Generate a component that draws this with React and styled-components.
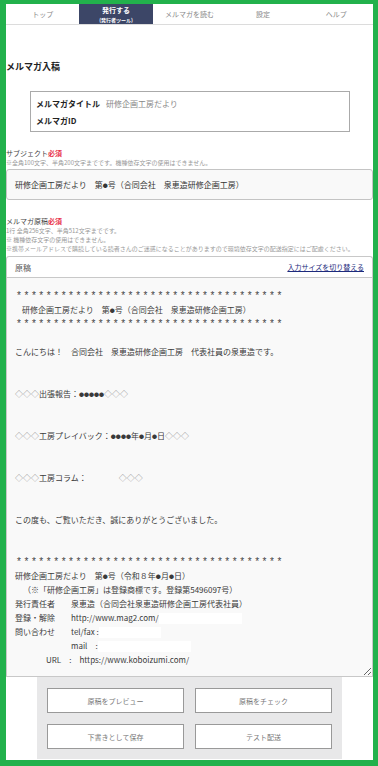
import React from 'react';
import styled, { createGlobalStyle } from 'styled-components';

const GlobalStyle = createGlobalStyle`
  html, body {
    margin: 0;
    padding: 0;
    background: #ffffff;
  }
  body {
    font-family: "Noto Sans CJK JP", "Noto Sans", sans-serif;
    color: #333;
  }
`;

const Frame = styled.div`
  box-sizing: border-box;
  width: 378px;
  height: 766px;
  border-style: solid;
  border-color: #22b14c;
  border-width: 4px 5px 6px 6px;
  background: #fff;
  overflow: hidden;
  display: flex;
  flex-direction: column;
`;

const Nav = styled.nav`
  display: grid;
  grid-template-columns: repeat(5, 1fr);
  height: 20px;
  border-bottom: 1px solid #dcdcdc;
`;

const NavItem = styled.div`
  display: flex;
  flex-direction: column;
  align-items: center;
  justify-content: center;
  gap: 1px;
  font-size: 7px;
  line-height: 9px;
  color: ${(p) => (p.active ? '#fff' : '#888')};
  background: ${(p) => (p.active ? '#3c4667' : 'transparent')};
  font-weight: ${(p) => (p.active ? 700 : 400)};
`;

const NavSub = styled.span`
  font-size: 5px;
  line-height: 7px;
`;

const Title = styled.h1`
  margin: 37px 0 0 0;
  font-size: 9px;
  font-weight: 700;
  color: #222;
  line-height: 10px;
`;

const InfoBox = styled.div`
  margin: 19px 23px 0 24px;
  border: 1px solid #aaa;
  padding: 5px 5px 4px;
  display: flex;
  flex-direction: column;
  gap: 4px;
`;

const InfoRow = styled.div`
  display: flex;
  align-items: center;
  font-size: 8px;
  line-height: 13px;
`;

const InfoLabel = styled.span`
  font-weight: 700;
  color: #222;
  width: 70px;
`;

const InfoValue = styled.span`
  color: #888;
`;

const FieldLabel = styled.div`
  margin-top: ${(p) => p.top}px;
  font-size: 7px;
  line-height: 10px;
  color: #444;
`;

const Required = styled.span`
  color: #e8324a;
  font-weight: 700;
`;

const Note = styled.div`
  font-size: 6px;
  line-height: 9px;
  color: #999;
`;

const SubjectInput = styled.div`
  box-sizing: border-box;
  margin-top: 2px;
  height: 31px;
  border: 1px solid #c4c4c4;
  border-radius: 3px;
  background: #f9f9f9;
  display: flex;
  align-items: center;
  padding-left: 8px;
  font-size: 8px;
  color: #333;
`;

const Draft = styled.div`
  margin-top: 3px;
  border: 1px solid #c8c8c8;
  border-bottom: none;
  border-radius: 3px 3px 0 0;
`;

const DraftHead = styled.div`
  display: flex;
  justify-content: space-between;
  align-items: center;
  height: 20px;
  padding: 0 8px 0 8px;
  border-bottom: 1px solid #c8c8c8;
`;

const DraftTitle = styled.span`
  font-size: 8px;
  color: #555;
`;

const SwitchLink = styled.a`
  font-size: 7px;
  color: #1d2a7c;
  text-decoration: underline;
`;

const Body = styled.div`
  box-sizing: border-box;
  height: 399px;
  background: #f9f9f9;
  border-bottom: 1px solid #c8c8c8;
  padding: 11px 8px 0 8px;
  font-size: 8px;
  line-height: 14px;
  color: #3a3a3a;
  resize: both;
  overflow: hidden;
  white-space: pre;
`;

const Line = styled.div`
  height: 14px;
  padding-left: ${(p) => p.indent || 0}px;
`;

const Stars = styled.div`
  height: 14px;
  padding-left: 2px;
  font-family: "Liberation Sans", Arial, sans-serif;
  font-size: 10px;
  letter-spacing: 3.55px;
  color: #444;
`;

const Diamond = styled.span`
  color: #888;
`;

const Dot = styled.span`
  font-size: 5px;
  vertical-align: 1px;
`;

const Col = styled.span`
  display: inline-block;
  width: ${(p) => p.w}px;
`;

const Redact = styled.span`
  display: inline-block;
  vertical-align: middle;
  width: ${(p) => p.w}px;
  height: 11px;
  background: #fff;
`;

const ButtonPanel = styled.div`
  margin: 0 31px 0 31px;
  background: #e8e8e9;
  padding: 11px 10px 10px;
  display: grid;
  grid-template-columns: 1fr 1fr;
  column-gap: 11px;
  row-gap: 11px;
`;

const Button = styled.button`
  box-sizing: border-box;
  height: 25px;
  background: #fff;
  border: 1px solid #999;
  font-family: "Noto Sans CJK JP", sans-serif;
  font-size: 7px;
  color: #777;
  cursor: pointer;
`;

const Content = styled.div`
  display: flex;
  flex-direction: column;
`;

const stars = '*'.repeat(36);

const dots = (n) => Array.from({ length: n }, (_, i) => <Dot key={i}>●</Dot>);

export default function App() {
  const navItems = ['トップ', null, 'メルマガを読む', '設定', 'ヘルプ'];
  return (
    <>
      <GlobalStyle />
      <Frame>
        <Nav>
          {navItems.map((label, i) =>
            label ? (
              <NavItem key={i}>{label}</NavItem>
            ) : (
              <NavItem key={i} active>
                <span>発行する</span>
                <NavSub>(発行者ツール)</NavSub>
              </NavItem>
            )
          )}
        </Nav>
        <Content>
          <Title>メルマガ入稿</Title>
          <InfoBox>
            <InfoRow>
              <InfoLabel>メルマガタイトル</InfoLabel>
              <InfoValue>研修企画工房だより</InfoValue>
            </InfoRow>
            <InfoRow>
              <InfoLabel>メルマガID</InfoLabel>
            </InfoRow>
          </InfoBox>

          <FieldLabel top={16}>
            サブジェクト<Required>必須</Required>
          </FieldLabel>
          <Note>※全角100文字、半角200文字までです。機種依存文字の使用はできません。</Note>
          <SubjectInput>研修企画工房だより　第{dots(1)}号（合同会社　泉恵造研修企画工房）</SubjectInput>

          <FieldLabel top={16}>
            メルマガ原稿<Required>必須</Required>
          </FieldLabel>
          <Note>1行 全角256文字、半角512文字までです。</Note>
          <Note>※ 機種依存文字の使用はできません。</Note>
          <Note>※携帯メールアドレスで購読している読者さんのご迷惑になることがありますので環境依存文字の配送指定にはご配慮ください。</Note>

          <Draft>
            <DraftHead>
              <DraftTitle>原稿</DraftTitle>
              <SwitchLink>入力サイズを切り替える</SwitchLink>
            </DraftHead>
            <Body>
              <Stars>{stars}</Stars>
              <Line indent={7}>研修企画工房だより　第{dots(1)}号（合同会社　泉恵造研修企画工房）</Line>
              <Stars>{stars}</Stars>
              <Line />
              <Line>こんにちは！　合同会社　泉恵造研修企画工房　代表社員の泉恵造です。</Line>
              <Line />
              <Line />
              <Line><Diamond>◇◇◇</Diamond>出張報告：{dots(5)}<Diamond>◇◇◇</Diamond></Line>
              <Line />
              <Line />
              <Line><Diamond>◇◇◇</Diamond>工房プレイバック：{dots(4)}年{dots(1)}月{dots(1)}日<Diamond>◇◇◇</Diamond></Line>
              <Line />
              <Line />
              <Line><Diamond>◇◇◇</Diamond>工房コラム：　　　　<Diamond>◇◇◇</Diamond></Line>
              <Line />
              <Line />
              <Line>この度も、ご覧いただき、誠にありがとうございました。</Line>
              <Line />
              <Line />
              <Stars>{stars}</Stars>
              <Line>研修企画工房だより　第{dots(1)}号（令和８年{dots(1)}月{dots(1)}日）</Line>
              <Line indent={8}>（※「研修企画工房」は登録商標です。登録第5496097号）</Line>
              <Line><Col w={56}>発行責任者</Col>泉恵造（合同会社泉恵造研修企画工房代表社員）</Line>
              <Line><Col w={56}>登録・解除</Col>http://www.mag2.com/<Redact w={83} /></Line>
              <Line><Col w={56}>問い合わせ</Col>tel/fax :<Redact w={62} /></Line>
              <Line><Col w={56}></Col>mail　:<Redact w={93} /></Line>
              <Line indent={31}>URL　:　https://www.koboizumi.com/</Line>
            </Body>
          </Draft>

          <ButtonPanel>
            <Button>原稿をプレビュー</Button>
            <Button>原稿をチェック</Button>
            <Button>下書きとして保存</Button>
            <Button>テスト配送</Button>
          </ButtonPanel>
        </Content>
      </Frame>
    </>
  );
}
